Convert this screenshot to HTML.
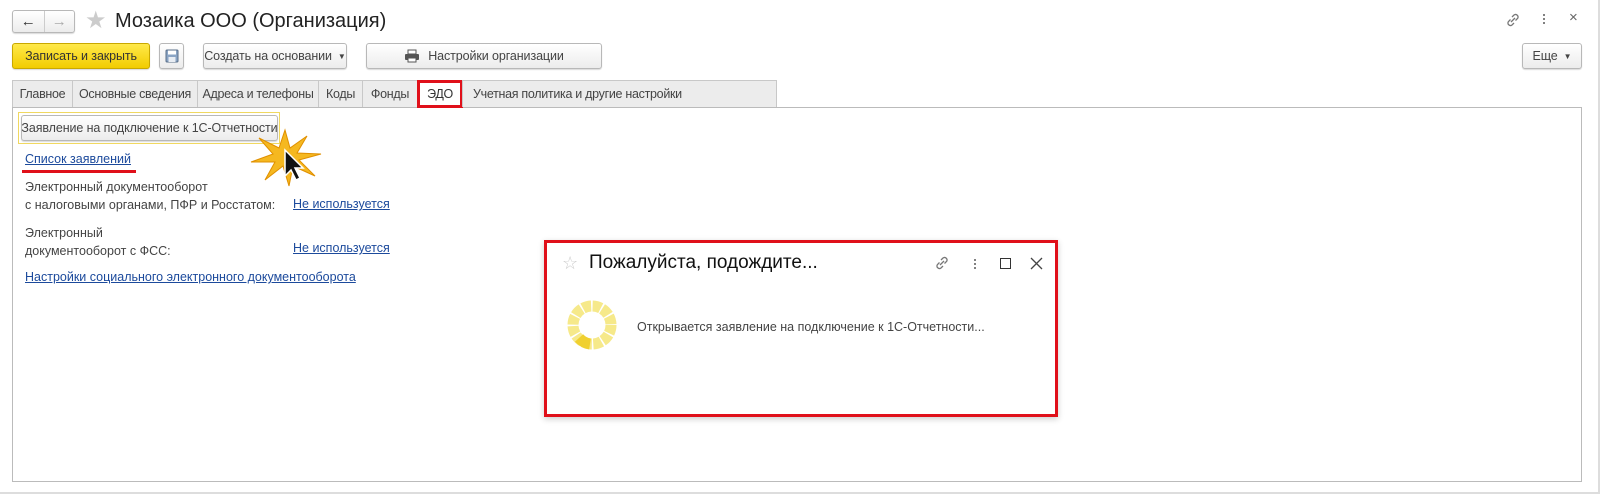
<!DOCTYPE html>
<html><head><meta charset="utf-8"><style>
*{box-sizing:border-box}
body{margin:0;width:1602px;height:496px;background:#fff;font-family:"Liberation Sans",Arial,sans-serif;font-size:12.5px;color:#333;position:relative;overflow:hidden}
.abs{position:absolute;white-space:nowrap}
.btn{position:absolute;white-space:nowrap;border:1px solid #b8b8b8;border-radius:3px;background:linear-gradient(#fff,#ececec);box-shadow:0 1px 1px rgba(0,0,0,.15);display:flex;align-items:center;justify-content:center;color:#444;letter-spacing:-0.1px}
.tab{position:absolute;white-space:nowrap;top:80px;height:27px;border:1px solid #c8c8c8;border-bottom:none;background:#ececec;display:flex;align-items:center;justify-content:center;color:#444;letter-spacing:-0.3px}
a{color:#1c4a9c;text-decoration:underline;position:absolute;white-space:nowrap}
.t{position:absolute;white-space:nowrap;color:#444;line-height:18px}
</style></head><body>
<div class="abs" style="left:0;top:0;width:1600px;height:494px;border-right:2px solid #ddd;border-bottom:2px solid #ddd"></div>
<div class="btn" style="left:12px;top:10px;width:63px;height:23px;justify-content:flex-start">
 <span style="width:31px;text-align:center;font-size:15px;color:#333">&#8592;</span><span style="width:1px;height:21px;background:#ccc"></span><span style="width:30px;text-align:center;font-size:15px;color:#aaa">&#8594;</span></div>
<div class="abs" style="left:85px;top:6px;font-size:24px;color:#ccc">&#9733;</div>
<div class="abs" style="left:115px;top:10px;font-size:20px;color:#222">Мозаика ООО (Организация)</div>
<svg class="abs" style="left:1505px;top:12px" width="16" height="16" viewBox="0 0 16 16"><g fill="none" stroke="#777" stroke-width="1.3"><path d="M7 5l2-2a2.5 2.5 0 013.5 3.5l-2 2"/><path d="M9 11l-2 2a2.5 2.5 0 01-3.5-3.5l2-2"/><path d="M6 10l4-4"/></g></svg>
<div class="abs" style="left:1543px;top:13px;width:2px;height:12px;background:radial-gradient(circle,#777 1px,transparent 1.2px) 0 0/2px 4px"></div>
<div class="abs" style="left:1569px;top:9px;font-size:15px;color:#666">&#215;</div>

<div class="btn" style="left:12px;top:43px;width:138px;height:26px;background:linear-gradient(#ffe94a,#f2cc00);border-color:#c9a800;color:#333">Записать и закрыть</div>
<div class="btn" style="left:159px;top:43px;width:25px;height:26px"><svg width="14" height="14" viewBox="0 0 14 14"><rect x="1" y="1" width="12" height="12" rx="1" fill="#8aa4c4" stroke="#5a6f8a"/><rect x="3" y="1.5" width="8" height="4" fill="#fff"/><rect x="3.5" y="8" width="7" height="5" fill="#e8edf3"/></svg></div>
<div class="btn" style="left:203px;top:43px;width:144px;height:26px">Создать на основании <span style="font-size:8px;margin-left:6px">&#9660;</span></div>
<div class="btn" style="left:366px;top:43px;width:236px;height:26px"><svg width="16" height="14" viewBox="0 0 16 14" style="margin-right:8px"><rect x="4" y="1" width="8" height="4" fill="#fff" stroke="#555"/><rect x="1" y="5" width="14" height="6" rx="1" fill="#555"/><rect x="4" y="9" width="8" height="4" fill="#fff" stroke="#555"/></svg>Настройки организации</div>
<div class="btn" style="left:1522px;top:43px;width:60px;height:26px">Еще <span style="font-size:8px;margin-left:6px">&#9660;</span></div>

<div class="abs" style="left:12px;top:107px;width:1570px;height:375px;border:1px solid #bbb"></div>
<div class="tab" style="left:12px;width:61px">Главное</div>
<div class="tab" style="left:72px;width:126px">Основные сведения</div>
<div class="tab" style="left:197px;width:122px">Адреса и телефоны</div>
<div class="tab" style="left:318px;width:45px">Коды</div>
<div class="tab" style="left:362px;width:56px">Фонды</div>
<div class="tab" style="left:417px;width:46px;background:#fff;height:28px;border:3px solid #e0101a;color:#333">ЭДО</div>
<div class="tab" style="left:462px;width:315px;justify-content:flex-start;padding-left:10px">Учетная политика и другие настройки</div>

<div class="abs" style="left:18px;top:112px;width:262px;height:32px;border:1px solid #f0d860"></div>
<div class="btn" style="left:21px;top:115px;width:257px;height:26px">Заявление на подключение к 1С-Отчетности</div>
<svg class="abs" style="left:245px;top:128px" width="80" height="60" viewBox="0 0 80 60"><polygon points="40,2 45,20 62,8 52,25 76,26 54,32 70,48 48,38 44,58 38,38 20,52 30,34 6,34 28,26 14,10 34,20" fill="#f5b820" stroke="#e09000"/><path d="M40 22 L40 48 L46 42 L51 52 L55 50 L50 40 L58 40 Z" fill="#111" stroke="#fff" stroke-width="1.5"/></svg>
<a style="left:25px;top:152px">Список заявлений</a>
<div class="abs" style="left:22px;top:170px;width:114px;height:3px;background:#e0101a"></div>
<div class="t" style="left:25px;top:178px">Электронный документооборот<br>с налоговыми органами, ПФР и Росстатом:</div>
<a style="left:293px;top:197px">Не используется</a>
<div class="t" style="left:25px;top:224px">Электронный<br>документооборот с ФСС:</div>
<a style="left:293px;top:241px">Не используется</a>
<a style="left:25px;top:270px">Настройки социального электронного документооборота</a>

<div class="abs" style="left:544px;top:240px;width:514px;height:177px;border:3px solid #e0101a;background:#fff;box-shadow:0 2px 6px rgba(0,0,0,.2)"></div>
<div class="abs" style="left:562px;top:253px;font-size:18px;color:#ccc">&#9734;</div>
<div class="abs" style="left:589px;top:252px;font-size:19px;color:#111">Пожалуйста, подождите...</div>
<svg class="abs" style="left:934px;top:255px" width="16" height="16" viewBox="0 0 16 16"><g fill="none" stroke="#777" stroke-width="1.3"><path d="M7 5l2-2a2.5 2.5 0 013.5 3.5l-2 2"/><path d="M9 11l-2 2a2.5 2.5 0 01-3.5-3.5l2-2"/><path d="M6 10l4-4"/></g></svg>
<div class="abs" style="left:974px;top:258px;width:2px;height:12px;background:radial-gradient(circle,#777 1px,transparent 1.2px) 0 0/2px 4px"></div>
<div class="abs" style="left:1000px;top:258px;width:11px;height:11px;border:1.5px solid #333"></div>
<svg class="abs" style="left:1030px;top:257px" width="13" height="13"><path d="M1 1L12 12M12 1L1 12" stroke="#444" stroke-width="1.3"/></svg>
<svg class="abs" style="left:567px;top:300px" width="50" height="50" viewBox="0 0 50 50"><circle cx="25" cy="25" r="19" fill="none" stroke="#f6e98a" stroke-width="11" stroke-dasharray="8.5 1.5"/><path d="M12 38 A19 19 0 0 0 23 44" stroke="#f0d030" stroke-width="11" fill="none"/></svg>
<div class="abs" style="left:637px;top:320px;font-size:12.5px;color:#444">Открывается заявление на подключение к 1С-Отчетности...</div>
</body></html>
